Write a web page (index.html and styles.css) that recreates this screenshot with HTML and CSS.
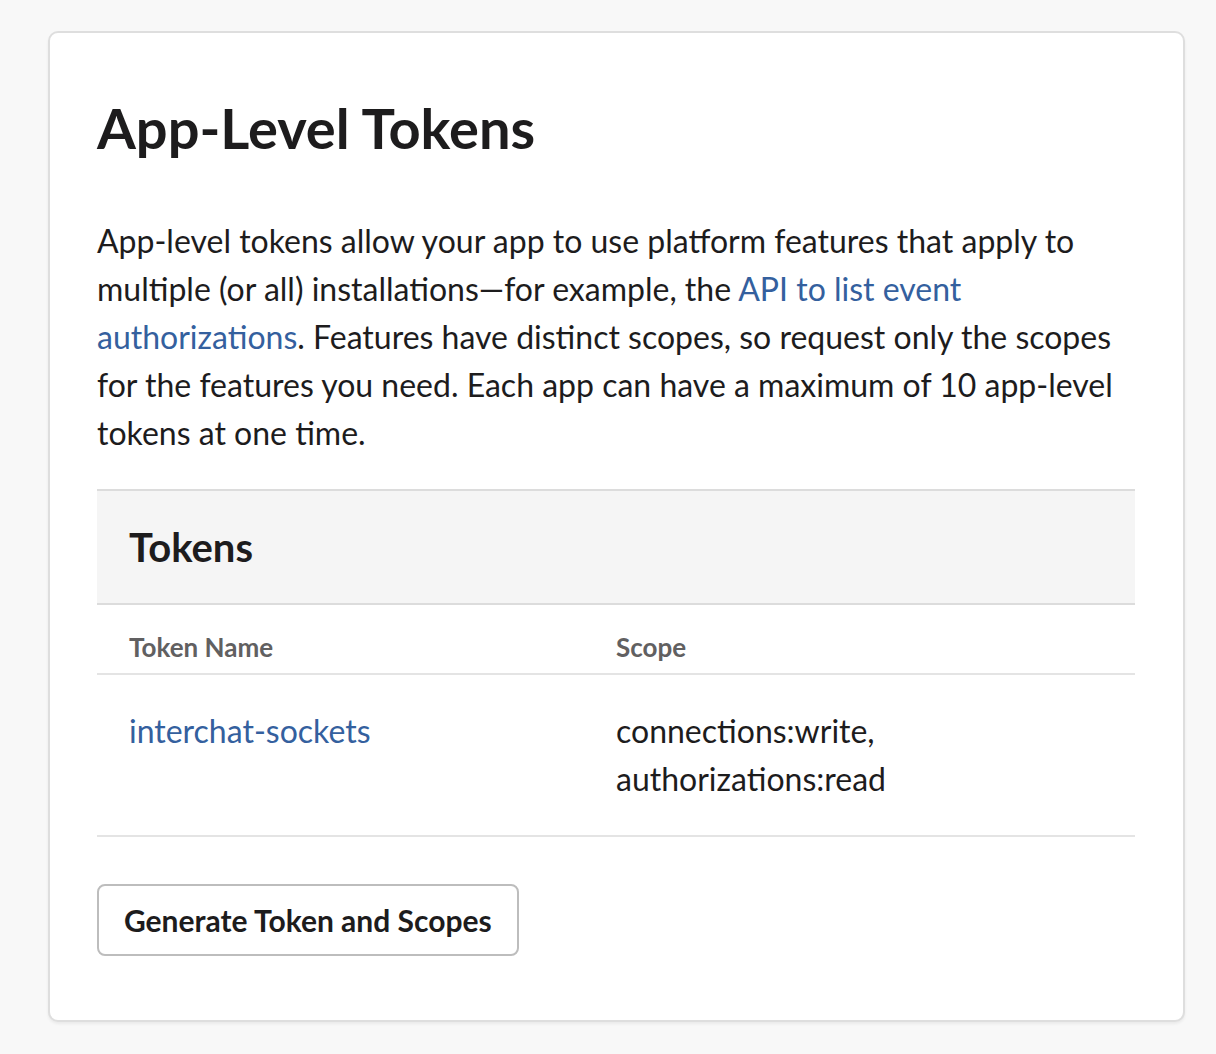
FILE: index.html
```html
<!DOCTYPE html>
<html lang="en">
<head>
<meta charset="utf-8">
<title>App-Level Tokens</title>
<link rel="stylesheet" href="styles.css">
</head>
<body>
  <section class="card">
    <h1 class="title">App-Level Tokens</h1>
    <p class="intro">App-level tokens allow your app to use platform features that apply to multiple (or all) installations—for example, the <a href="#" class="link">API to list event authorizations</a>. Features have distinct scopes, so request only the scopes for the features you need. Each app can have a maximum of 10 app-level tokens at one time.</p>

    <div class="tokens">
      <div class="tokens-head">
        <h2 class="tokens-title">Tokens</h2>
      </div>
      <div class="table">
        <div class="row row-head">
          <div class="cell">Token Name</div>
          <div class="cell">Scope</div>
        </div>
        <div class="row row-data">
          <div class="cell"><a href="#" class="link">interchat-sockets</a></div>
          <div class="cell">connections:write,<br>authorizations:read</div>
        </div>
      </div>
    </div>

    <button class="btn" type="button">Generate Token and Scopes</button>
  </section>
</body>
</html>
```

FILE: styles.css
```css
* { box-sizing: border-box; }

html, body {
  margin: 0;
  background: #f8f8f8;
}

body {
  padding: 31px 31px 0 48px;
  font-family: Lato, "Noto Sans", sans-serif;
  color: #1d1c1d;
  height: 1054px;
  overflow: hidden;
}

.card {
  background: #fff;
  border: 2px solid #dedede;
  border-radius: 10px;
  box-shadow: 0 2px 3px rgba(0, 0, 0, 0.06);
  padding: 48px 48px 64px 47px;
}

.title {
  margin: 12px 0 0;
  font-size: 56px;
  line-height: 70px;
  font-weight: 700;
}

.intro {
  margin: 54px 0 0;
  font-size: 32px;
  line-height: 48px;
}

.link {
  color: #34609e;
  text-decoration: none;
}

.tokens {
  margin-top: 32px;
  border-top: 2px solid #dcdcdc;
}

.tokens-head {
  background: #f5f5f5;
  padding: 32px 32px;
  border-bottom: 2px solid #dcdcdc;
}

.tokens-title {
  margin: 0;
  font-size: 40px;
  line-height: 48px;
  font-weight: 700;
}

.row {
  display: grid;
  grid-template-columns: 487px 1fr;
  border-bottom: 2px solid #e4e4e4;
}

.cell {
  padding: 0 32px;
}

.row-head .cell {
  padding-top: 24px;
  padding-bottom: 8px;
  font-size: 26px;
  line-height: 36px;
  font-weight: 700;
  color: #616061;
}

.row-data .cell {
  padding-top: 32px;
  padding-bottom: 32px;
  font-size: 32px;
  line-height: 48px;
}

.btn {
  display: block;
  margin-top: 47px;
  height: 72px;
  padding: 0 25px;
  background: #fff;
  border: 2px solid #bdbdbd;
  border-radius: 8px;
  font-family: Lato, "Noto Sans", sans-serif;
  font-size: 30px;
  font-weight: 700;
  color: #1d1c1d;
}
```
